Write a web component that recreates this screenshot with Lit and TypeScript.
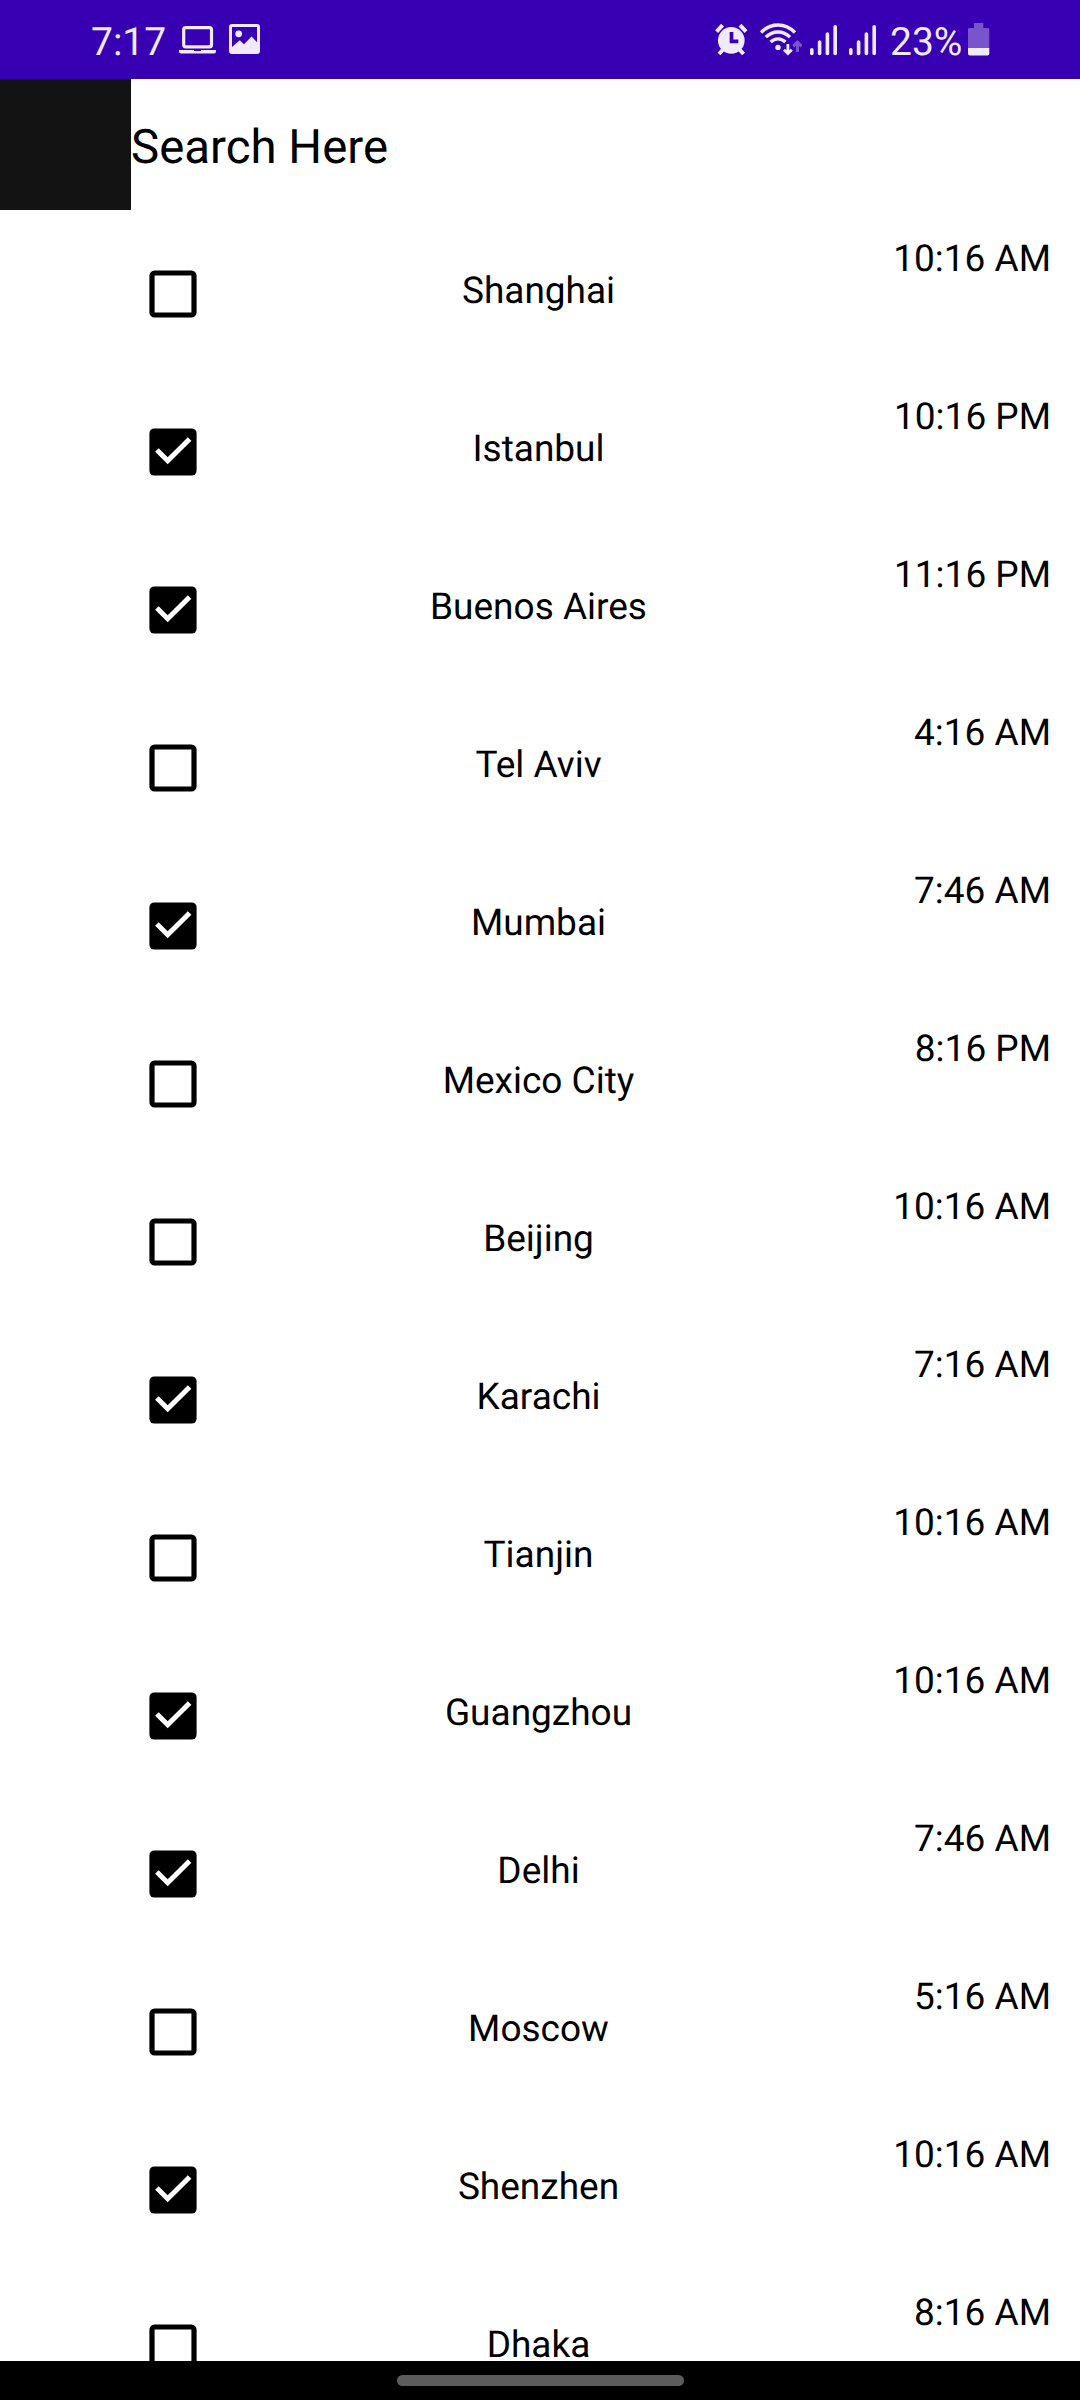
import { LitElement, html, css, svg } from "lit";
import { customElement, property } from "lit/decorators.js";

interface City {
  name: string;
  time: string;
  checked: boolean;
}

const CITIES: City[] = [
  { name: "Shanghai", time: "10:16 AM", checked: false },
  { name: "Istanbul", time: "10:16 PM", checked: true },
  { name: "Buenos Aires", time: "11:16 PM", checked: true },
  { name: "Tel Aviv", time: "4:16 AM", checked: false },
  { name: "Mumbai", time: "7:46 AM", checked: true },
  { name: "Mexico City", time: "8:16 PM", checked: false },
  { name: "Beijing", time: "10:16 AM", checked: false },
  { name: "Karachi", time: "7:16 AM", checked: true },
  { name: "Tianjin", time: "10:16 AM", checked: false },
  { name: "Guangzhou", time: "10:16 AM", checked: true },
  { name: "Delhi", time: "7:46 AM", checked: true },
  { name: "Moscow", time: "5:16 AM", checked: false },
  { name: "Shenzhen", time: "10:16 AM", checked: true },
  { name: "Dhaka", time: "8:16 AM", checked: false },
];

@customElement("status-bar")
export class StatusBar extends LitElement {
  static styles = css`
    :host {
      display: flex;
      justify-content: space-between;
      align-items: flex-start;
      box-sizing: border-box;
      height: 79px;
      padding: 20px 90px 0 91px;
      background: #3700b3;
      color: #f1e9fd;
      font: 39px/40px Roboto, sans-serif;
      text-rendering: geometricPrecision;
    }
    .group {
      display: flex;
      height: 40px;
    }
    .clock {
      width: 88px;
      padding-top: 2px;
      white-space: nowrap;
    }
    .percent {
      width: 78px;
      margin-left: 14px;
      padding-top: 2px;
      white-space: nowrap;
    }
    svg {
      display: block;
      flex: none;
      fill: currentColor;
    }
    .line {
      fill: none;
      stroke: currentColor;
    }
    .dark {
      fill: none;
      stroke: #3700b3;
    }
    .image,
    .wifi {
      margin-left: 12px;
    }
    .signal {
      margin-left: 8px;
    }
    .signal + .signal {
      margin-left: 12px;
    }
    .faint {
      opacity: 0.36;
    }
  `;

  private signal() {
    return html`<svg class="signal" width="27" height="40" viewBox="0 0 27 40">
      <rect x="0" y="28" width="3.6" height="7.2" rx="1.8"></rect>
      <rect x="7.8" y="20.3" width="3.6" height="14.9" rx="1.8"></rect>
      <rect x="15.6" y="12.3" width="3.6" height="22.9" rx="1.8"></rect>
      <rect x="23.4" y="5" width="3.6" height="30.2" rx="1.8"></rect>
    </svg>`;
  }

  render() {
    return html`
      <div class="group">
        <span class="clock">7:17</span>
        <svg width="38" height="40" viewBox="0 0 38 40">
          <rect class="line" x="4.7" y="7.6" width="27.8" height="19.2" rx="2" stroke-width="3.2"></rect>
          <path d="M0 30H15V31H22V30H37V31.8Q37 33.6 35 33.6H2Q0 33.6 0 31.8Z"></path>
        </svg>
        <svg class="image" width="31" height="40" viewBox="0 0 31 40">
          <path
            fill-rule="evenodd"
            d="M3 4H28Q31 4 31 7V31Q31 34 28 34H3Q0 34 0 31V7Q0 4 3 4ZM3 7V27L10.7 20.3L15 24.3L22.6 16.5L28 22.2V7Z"
          ></path>
          <circle cx="9.7" cy="13.8" r="3.4"></circle>
        </svg>
      </div>
      <div class="group">
        <svg width="33" height="40" viewBox="0 0 33 40">
          <circle cx="16.3" cy="20.4" r="13.3"></circle>
          <path class="line" stroke-width="4" d="M1.6 11.6L7.6 5.2M31 11.6L25 5.2M4 34L8.5 29M28.6 34L24 29"></path>
          <path class="dark" stroke-width="3.7" d="M16.5 12V21.4H23.3"></path>
        </svg>
        <svg class="wifi" width="42" height="40" viewBox="0 0 42 40">
          <path
            class="line"
            stroke-width="3.3"
            d="M1 12.5Q8.5 5 18 5T35 12.5M5.8 17.2Q11 12 18 12T30 17.2M10.6 22Q14 18.8 18 18.8T25.4 22"
          ></path>
          <circle cx="18" cy="27.4" r="2.7"></circle>
          <path class="line" stroke-width="2.8" d="M27.9 24V33M24 29.8L27.9 33.6L31.8 29.8"></path>
          <path class="line faint" stroke-width="3" d="M37.5 32V23M33.3 26.4L37.5 22.2L41.7 26.4"></path>
        </svg>
        ${this.signal()}${this.signal()}
        <span class="percent">23%</span>
        <svg width="22" height="40" viewBox="0 0 22 40">
          <path class="faint" d="M6 3H15.3V8H20Q21.3 8 21.3 9.3V28H0V9.3Q0 8 1.3 8H6Z"></path>
          <path d="M0 28H21.3V33.5Q21.3 35.6 19.3 35.6H2Q0 35.6 0 33.5Z"></path>
        </svg>
      </div>
    `;
  }
}

@customElement("city-row")
export class CityRow extends LitElement {
  @property({ attribute: false }) city!: City;

  static styles = css`
    :host {
      display: grid;
      grid-template-columns: 84px 647px 1fr;
      box-sizing: border-box;
      height: 158px;
      padding: 28px 29px 0 131px;
      color: #000;
      font: 37px/44px Roboto, sans-serif;
      text-rendering: geometricPrecision;
      white-space: nowrap;
    }
    .box {
      display: block;
      margin-top: 14px;
    }
    .name {
      padding-top: 32px;
      text-align: center;
    }
    .time {
      justify-self: end;
    }
  `;

  render() {
    const { name, time, checked } = this.city;
    return html`
      <svg class="box" width="84" height="84" viewBox="0 0 84 84">
        ${checked
          ? svg`<rect x="18.4" y="18.4" width="47.2" height="47.2" rx="5"></rect>
              <path d="M25.9 40L36.7 50.8L58.6 29" fill="none" stroke="#fff" stroke-width="5"></path>`
          : svg`<rect x="21" y="21" width="42" height="42" rx="2.6"
              fill="none" stroke="#000" stroke-width="5.2"></rect>`}
      </svg>
      <span class="name">${name}</span>
      <span class="time">${time}</span>
    `;
  }
}

@customElement("app-root")
export class AppRoot extends LitElement {
  static styles = css`
    :host {
      display: flex;
      flex-direction: column;
      width: 1080px;
      height: 2400px;
      overflow: hidden;
      background: #fff;
    }
    status-bar,
    .search,
    .nav {
      flex: none;
    }
    .search {
      display: flex;
      height: 131px;
      color: #000;
      font: 47.4px/137px Roboto, sans-serif;
      text-rendering: geometricPrecision;
    }
    .icon {
      width: 131px;
      background: #131313;
    }
    .list {
      flex: 1;
      min-height: 0;
      overflow: hidden;
    }
    .nav {
      display: flex;
      justify-content: center;
      align-items: center;
      height: 39px;
      background: #000;
    }
    .handle {
      width: 287px;
      height: 11px;
      border-radius: 6px;
      background: #5c5c5c;
    }
  `;

  render() {
    return html`
      <status-bar></status-bar>
      <div class="search">
        <div class="icon"></div>
        <span>Search Here</span>
      </div>
      <div class="list">${CITIES.map((city) => html`<city-row .city=${city}></city-row>`)}</div>
      <div class="nav"><div class="handle"></div></div>
    `;
  }
}
